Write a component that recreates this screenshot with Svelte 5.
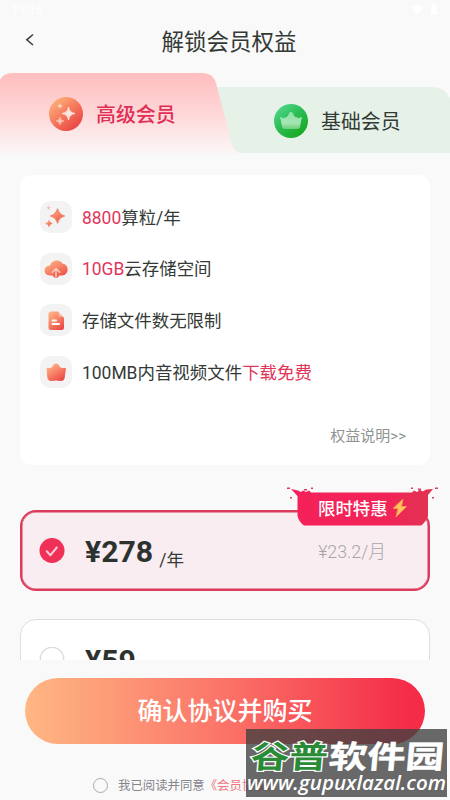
<script>
  const benefits = [
    { icon: 'spark', parts: [['8800', true], ['算粒/年', false]] },
    { icon: 'cloud', parts: [['10GB', true], ['云存储空间', false]] },
    { icon: 'file', parts: [['存储文件数无限制', false]] },
    { icon: 'crown', parts: [['100MB内音视频文件', false], ['下载免费', true]] }
  ];
</script>

<main class="screen">
  <div class="status">
    <span>11:15</span>
    <svg width="28" height="12" viewBox="0 0 28 12" fill="#fff"><path d="M0 3Q6.500-2 13 3L6.500 11ZM20 2h1.500V0h3v2H26v9h-6z" /></svg>
  </div>

  <header>
    <svg class="back" width="10" height="14" viewBox="0 0 10 14"><path d="M8 1.500 1.800 6.800 8 12" fill="none" stroke="#3b413e" stroke-width="1.600" /></svg>
    <h1>解锁会员权益</h1>
  </header>

  <nav class="tabs">
    <svg class="tabs-bg" width="450" height="82" viewBox="0 0 450 82">
      <defs>
        <linearGradient id="pink" x1="0" y1="0" x2="0" y2="1">
          <stop offset="0" stop-color="#ffbdbe" />
          <stop offset=".45" stop-color="#ffd4d5" />
          <stop offset="1" stop-color="#fbf7f7" />
        </linearGradient>
      </defs>
      <path d="M200 14H433Q444 14 450 25V80H200Z" fill="#e6f2e8" />
      <path d="M0 7Q3 0 13 0H203Q213 0 216 10L232 71Q234 78 240 80V81H0Z" fill="url(#pink)" />
    </svg>
    <button class="tab premium">
      <svg width="36" height="36" viewBox="0 0 36 36">
        <defs>
          <linearGradient id="orb" x1="0" y1="0" x2=".8" y2="1">
            <stop offset="0" stop-color="#ffc083" />
            <stop offset=".55" stop-color="#f5775c" />
            <stop offset="1" stop-color="#e83f43" />
          </linearGradient>
        </defs>
        <circle cx="18" cy="18" r="17" fill="url(#orb)" />
        <path d="M20.500 11Q21.200 16.800 27 17.500Q21.200 18.200 20.500 24Q19.800 18.200 14 17.500Q19.800 16.800 20.500 11Z" fill="#ffe4dc" stroke="#ffe4dc" stroke-width="1" stroke-linejoin="round" />
        <path d="M12 21q.4 3.600 4 4q-3.600.4-4 4q-.4-3.600-4-4q3.600-.4 4-4Z" fill="#ffc4b0" stroke="#ffc4b0" stroke-width=".6" />
        <path d="M12 7q.3 2.700 3 3q-2.700.3-3 3q-.3-2.700-3-3q2.700-.3 3-3Z" fill="#ffd6ba" />
      </svg>
      <span>高级会员</span>
    </button>
    <button class="tab basic">
      <svg width="36" height="36" viewBox="0 0 36 36">
        <defs>
          <linearGradient id="leaf" x1="0" y1="0" x2=".8" y2="1">
            <stop offset="0" stop-color="#5bdc9c" />
            <stop offset=".5" stop-color="#2bbd54" />
            <stop offset="1" stop-color="#16a71c" />
          </linearGradient>
          <linearGradient id="mint" x1="0" y1="0" x2="0" y2="1">
            <stop offset="0" stop-color="#8ce0a8" />
            <stop offset=".65" stop-color="#a6e6b4" />
            <stop offset="1" stop-color="#74d181" />
          </linearGradient>
        </defs>
        <circle cx="18" cy="18" r="17" fill="url(#leaf)" />
        <path d="M7.500 14.500Q10 16.500 13.500 14.500Q16 13 16.500 10Q18 8.500 19.500 10Q20 13 22.500 14.500Q26 16.500 28.500 14.500L27.500 18L26.500 24Q26 25.500 24.500 25.500H11.500Q10 25.500 9.500 24L8.500 18Z" fill="url(#mint)" stroke="url(#mint)" stroke-linejoin="round" />
      </svg>
      <span>基础会员</span>
    </button>
  </nav>

  <section class="benefits">
    <svg width="0" height="0" class="defs">
      <defs>
        <linearGradient id="warm" x1="0" y1="0" x2=".7" y2="1">
          <stop offset="0" stop-color="#ffbc8d" />
          <stop offset=".5" stop-color="#f88769" />
          <stop offset="1" stop-color="#ec4c49" />
        </linearGradient>
      </defs>
    </svg>
    <ul>
      {#each benefits as item}
        <li>
          <span class="tile">
            <svg width="32" height="32" viewBox="0 0 32 32" fill="url(#warm)">
              {#if item.icon === 'spark'}
                <path d="M17.500 8Q18.700 13.600 24.500 15Q18.700 16.400 17.500 22Q16.300 16.400 10.500 15Q16.300 13.600 17.500 8Z" stroke="#f58366" stroke-width="1.200" stroke-linejoin="round" />
                <path d="M9 19q.6 3 3.500 3.500q-2.900.5-3.500 3.500q-.6-3-3.500-3.500q2.900-.5 3.500-3.500Z" stroke="#f9a386" stroke-width=".5" />
                <path d="M8.500 4.500q.4 2 2.500 2.300q-2.100.3-2.500 2.200q-.4-1.900-2.500-2.200q2.100-.3 2.500-2.300Z" opacity=".45" />
              {:else if item.icon === 'cloud'}
                <path d="M10 22.500C2.500 22.500 3 12.500 10 12.500C11.500 6.500 20 6 22.500 10.500C29.500 11.500 29.500 22 22 22.500H19.500Q18 25 16 25T12.500 22.500Z" />
                <path d="M16 24v-8m-3.800 3.200 3.800-3.700 3.800 3.700" fill="none" stroke="#fbc9bb" stroke-width="1.500" stroke-linecap="round" />
              {:else if item.icon === 'file'}
                <path d="M11 7.500h7l6 6v10q0 2.500-2.500 2.500H11q-2.500 0-2.500-2.500V10Q8.500 7.500 11 7.500Z" />
                <path d="M18.500 7.500 24 13h-3.500q-2 0-2-2Z" fill="#f4f2f2" opacity=".4" />
                <path d="M12.500 16.500h3.500m-3.500 3.500h6.500" stroke="#fff" stroke-width="2" stroke-linecap="round" />
              {:else}
                <path d="M7 12.500Q10 13 12.500 11.500Q13 8 16 8Q19 8 19.500 11.500Q22 13 25.500 12.500L25 16L24 22.500Q23.500 24.500 21.500 24.500L16 24L11 24.500Q8.500 24.500 8 22.500L7.300 16Z" stroke="url(#warm)" stroke-linejoin="round" />
              {/if}
            </svg>
          </span>
          <span class="label">{#each item.parts as [text, hot]}<span class:hot>{text}</span>{/each}</span>
        </li>
      {/each}
    </ul>
    <a class="more" href="#rules">权益说明&gt;&gt;</a>
  </section>

  <section class="plans">
    <div class="plan selected">
      <svg class="check" width="26" height="26" viewBox="0 0 26 26"><circle cx="13" cy="12.500" r="12.500" fill="#ef3158" /><path d="m7.800 13.200 3.700 4 6.300-7.700" fill="none" stroke="#ffcbd7" stroke-width="2" stroke-linecap="round" stroke-linejoin="round" /></svg>
      <strong>¥278</strong><span class="unit">/年</span>
      <span class="monthly">¥23.2/月</span>
      <div class="ribbon">
        <svg class="ribbon-bg" width="152" height="42" viewBox="0 0 152 42">
          <defs>
            <linearGradient id="rib"><stop offset="0" stop-color="#f5215a" /><stop offset=".7" stop-color="#f12457" /><stop offset="1" stop-color="#df3550" /></linearGradient>
          </defs>
          <path d="M5 3 12 4.500 15 6 17 4.500 20 6 23 4.500 25 6.500H126L128 4.500 131 6 134 4 137 5.500 140 3.500 147 3 142 9V30Q140 36 135 39.500H18Q13 36 11.500 30V10Z" fill="url(#rib)" />
          <path d="M1 1.500h3v1.500H1zM25 1.500h2v1.500h-2zM18 3h3v1.500h-3zM4 11h2v1.500H4zM125 1.500h2v1.500h-2zM132 2.500h3v2h-3zM149 1.500h3v1.500h-3zM146 11h2v1.500h-2z" fill="#de3b61" />
        </svg>
        <span>限时特惠</span>
        <svg class="bolt" width="16" height="20" viewBox="0 0 16 20"><path d="M11 1 1 10.500h5L4 19 14.500 8.500H9.500Z" fill="#ffc35a" stroke="#ff9355" stroke-width="1" /></svg>
      </div>
    </div>
    <div class="plan">
      <svg class="check" width="26" height="26" viewBox="0 0 26 26"><circle cx="13" cy="12" r="11.700" fill="#fff" stroke="#dcdcdc" stroke-width="1.400" /></svg>
      <strong>¥59</strong>
    </div>
  </section>

  <footer>
    <button class="buy">确认协议并购买</button>
    <div class="agree">
      <span class="radio"></span>
      <span>我已阅读并同意</span><span class="terms">《会员协议》</span>
    </div>
  </footer>

  <div class="watermark">
    <svg width="201" height="68" viewBox="0 0 201 68">
      <g class="brand" transform="translate(4 38.500) skewX(-5) scale(1 .8)">
        <text class="green" x="0" y="0" textLength="77" lengthAdjust="spacingAndGlyphs">谷普</text>
        <text class="white" x="78" y="0" textLength="115" lengthAdjust="spacingAndGlyphs">软件园</text>
      </g>
      <text class="url" x="1" y="60.500" textLength="199" lengthAdjust="spacingAndGlyphs">www.gupuxlazal.com</text>
    </svg>
  </div>
</main>

<style>
  :global(body) { margin: 0; }
  .screen {
    position: relative;
    display: flex;
    flex-direction: column;
    box-sizing: border-box;
    width: 450px;
    height: 800px;
    overflow: hidden;
    background: #f9f9f9;
    color: #333a36;
    font-family: Roboto, "Noto Sans CJK SC", sans-serif;
  }
  svg { display: block; flex: none; }
  button { border: 0; padding: 0; background: none; color: inherit; font-family: inherit; }
  .status {
    display: flex;
    justify-content: space-between;
    height: 20px;
    padding: 4px 11px 0 12px;
    box-sizing: border-box;
    color: #fff;
    font: 500 12px/12px Roboto, sans-serif;
  }
  header {
    position: relative;
    display: flex;
    justify-content: center;
    align-items: center;
    height: 42px;
    padding-left: 8px;
  }
  .back { position: absolute; left: 25px; top: 13px; }
  h1 { margin: 1px 0 0; font-size: 22.500px; line-height: 32px; font-weight: 400; }
  .tabs { position: relative; display: flex; height: 82px; margin-top: 11px; }
  .tabs-bg { position: absolute; left: 0; top: 0; }
  .tab {
    position: relative;
    display: flex;
    align-items: center;
    gap: 12px;
    width: 225px;
    height: 82px;
    padding-left: 48px;
    box-sizing: border-box;
    font-size: 19.900px;
    line-height: 28px;
  }
  .tab span { padding-top: 3px; }
  .premium { color: #e12f56; font-weight: 500; }
  .basic { padding-top: 14px; }
  .benefits {
    display: flex;
    flex-direction: column;
    justify-content: space-between;
    box-sizing: border-box;
    height: 290px;
    margin: 20px 20px 0;
    padding: 26px 24px 18px 20px;
    border-radius: 12px;
    background: #fff;
  }
  .defs { position: absolute; }
  ul { display: flex; flex-direction: column; gap: 19.700px; margin: 0; padding: 0; list-style: none; }
  li { display: flex; align-items: center; gap: 10px; height: 32px; font-size: 17.450px; line-height: 26px; white-space: nowrap; }
  .label { padding-top: 1px; }
  .tile { border-radius: 10px; background: #f4f3f3; }
  .hot { color: #e33559; }
  .more { align-self: flex-end; color: #8e9490; font-size: 15px; line-height: 22px; text-decoration: none; }
  .plans {
    display: flex;
    flex-direction: column;
    gap: 28px;
    height: 150px;
    margin-top: 45px;
    padding: 0 20px;
    clip-path: inset(-40px 0 0 0);
  }
  .plan {
    position: relative;
    display: flex;
    flex: none;
    align-items: center;
    box-sizing: border-box;
    height: 81px;
    padding: 0 43px 0 18px;
    border: 1px solid #dedede;
    border-radius: 16px;
    background: #fff;
  }
  .plan.selected { padding: 0 42px 0 17px; border: 2px solid #db3c5c; background: #faedf2; box-shadow: inset 0 0 0 .5px #db3c5c; }
  strong { margin-left: 20px; font-size: 30.200px; line-height: 36px; font-weight: 700; margin-top: 3px; color: #2c322f; }
  .unit { margin: 18px 0 0 6px; font-size: 17.500px; line-height: 24px; }
  .monthly { margin: 2px 0 0 auto; color: #a6a6a6; font-size: 17.800px; line-height: 26px; font-weight: 300; }
  .ribbon {
    position: absolute;
    right: -10px;
    top: -26px;
    display: flex;
    align-items: center;
    gap: 4px;
    width: 120px;
    height: 44px;
    padding-left: 32px;
    color: #fff;
    font-size: 17.400px;
    font-weight: 500;
    line-height: 24px;
  }
  .ribbon-bg { position: absolute; left: 0; top: 0; }
  .ribbon span, .bolt { position: relative; }
  .ribbon span { padding-top: 2px; }
  footer { display: flex; flex-direction: column; align-items: center; padding-top: 17.500px; }
  .buy {
    width: 400px;
    height: 66.500px;
    padding-top: 2px;
    border-radius: 34px;
    background: linear-gradient(90deg, #ffb783 0%, #fb7669 48%, #f42c48 96%);
    color: #fff;
    font-size: 25px;
    font-weight: 500;
    line-height: 36px;
  }
  .agree {
    align-self: flex-start;
    display: flex;
    align-items: center;
    margin: 33px 0 0 93px;
    color: #85858c;
    font-size: 12.400px;
    line-height: 18px;
    white-space: nowrap;
  }
  .radio { box-sizing: border-box; width: 15px; height: 15px; margin: -2px 10px 0 0; border: 1.500px solid #aaa; border-radius: 50%; }
  .terms { color: #ee7480; }
  .watermark { position: absolute; left: 246px; top: 729px; width: 201px; height: 68px; background: rgba(65, 65, 65, .79); }
  .brand { font: 700 39px "Noto Sans CJK SC", sans-serif; }
  .green { fill: #298b36; stroke: #fff; stroke-width: 3px; paint-order: stroke; }
  .white { fill: #fff; stroke: #fff; stroke-width: .6px; }
  .url { fill: #fff; font: italic 600 20px "Open Sans", sans-serif; }
</style>
